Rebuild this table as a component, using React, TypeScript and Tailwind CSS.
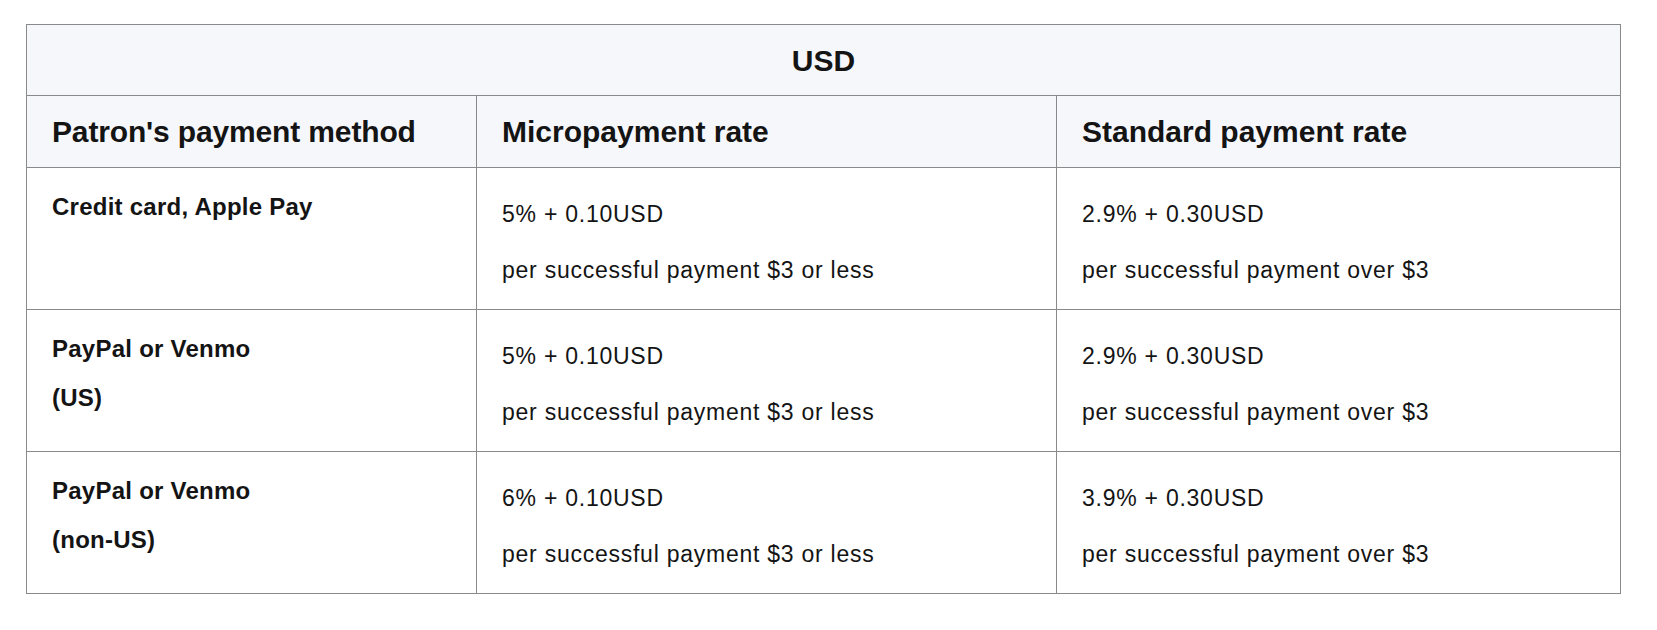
const rows = [
  {
    method: ['Credit card, Apple Pay'],
    micro: '5% + 0.10USD',
    standard: '2.9% + 0.30USD',
  },
  {
    method: ['PayPal or Venmo', '(US)'],
    micro: '5% + 0.10USD',
    standard: '2.9% + 0.30USD',
  },
  {
    method: ['PayPal or Venmo', '(non-US)'],
    micro: '6% + 0.10USD',
    standard: '3.9% + 0.30USD',
  },
];

function RateCell({ rate, note }: { rate: string; note: string }) {
  return (
    <td className="border border-[#8a8a8a] align-top pl-[25px] pr-6 pt-[29px] pb-[22px]">
      <p className="leading-[34px]">{rate}</p>
      <p className="leading-[34px] mt-[22px]">{note}</p>
    </td>
  );
}

export default function App() {
  return (
    <div className="min-h-screen bg-white pl-[26px] pt-[24px] text-[#141414] font-['Liberation_Sans',Arial,sans-serif]">
      <table className="table-fixed border-collapse w-[1594px]">
        <colgroup>
          <col className="w-[450px]" />
          <col className="w-[580px]" />
          <col className="w-[564px]" />
        </colgroup>
        <thead>
          <tr className="bg-[#f6f7fb]">
            <th colSpan={3} className="border border-[#8a8a8a] h-[71px] text-center text-[30px] font-bold">
              USD
            </th>
          </tr>
          <tr className="bg-[#f6f7fb]">
            <th className="border border-[#8a8a8a] h-[72px] text-left pl-[25px] text-[30px] font-bold tracking-[-0.15px]">
              Patron's payment method
            </th>
            <th className="border border-[#8a8a8a] text-left pl-[25px] text-[30px] font-bold">Micropayment rate</th>
            <th className="border border-[#8a8a8a] text-left pl-[25px] text-[30px] font-bold">Standard payment rate</th>
          </tr>
        </thead>
        <tbody className="text-[23px] tracking-[0.75px]">
          {rows.map((r, i) => (
            <tr key={i}>
              <td className="border border-[#8a8a8a] align-top pl-[25px] pt-[24px] font-bold tracking-[0.25px] text-[24px]">
                {r.method.map((m, j) => (
                  <p key={j} className={j > 0 ? 'leading-[30px] mt-[19px]' : 'leading-[30px]'}>
                    {m}
                  </p>
                ))}
              </td>
              <RateCell rate={r.micro} note="per successful payment $3 or less" />
              <RateCell rate={r.standard} note="per successful payment over $3" />
            </tr>
          ))}
        </tbody>
      </table>
    </div>
  );
}
